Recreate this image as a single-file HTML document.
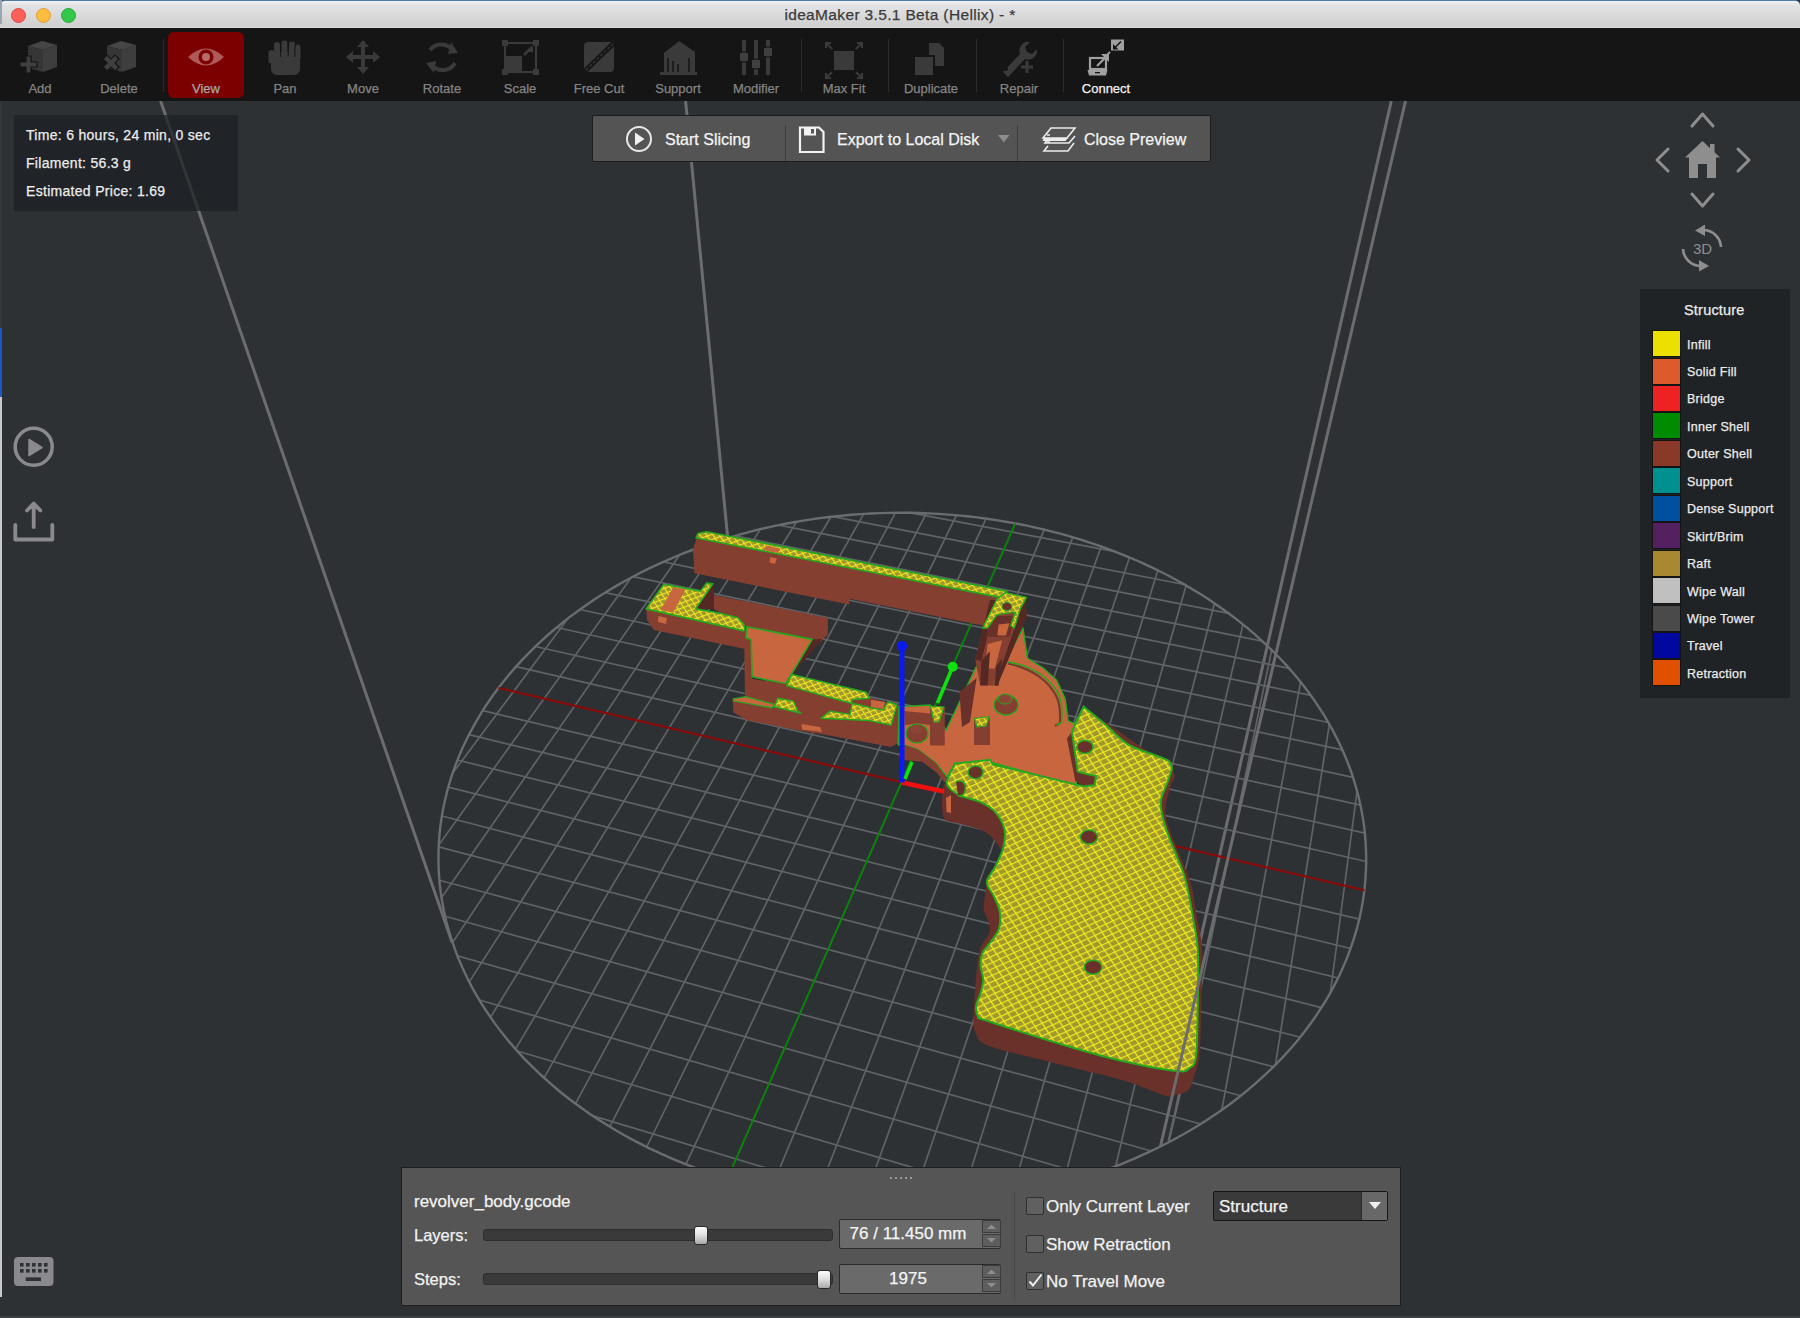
<!DOCTYPE html><html><head><meta charset="utf-8"><style>
*{box-sizing:border-box;margin:0;padding:0}
html,body{width:1800px;height:1318px;overflow:hidden;background:#2d3134;font-family:"Liberation Sans",sans-serif}
div{-webkit-text-stroke:0.25px currentColor}
#title{position:absolute;left:0;top:0;width:1800px;height:28px;background:linear-gradient(#f4f1f1 0px,#e3e3e5 4px,#d0d0d0 25px,#dcdcdc 27px);border-top:1px solid #4f7ca6;border-radius:5px 5px 0 0}
#title .t{position:absolute;left:0;right:0;top:5px;text-align:center;font-size:15.5px;color:#3a3a3a;letter-spacing:0.35px}
.tl{position:absolute;top:7px;width:15px;height:15px;border-radius:50%}
#tb{position:absolute;left:0;top:28px;width:1800px;height:73px;background:#151515}
#view3d{position:absolute;left:0;top:101px;width:1800px;height:1217px;background:#2d3134}
svg#scene{position:absolute;left:0;top:0}
.lbl{position:absolute;font-size:13px;color:#858585;text-align:center;width:90px;top:53px}
.sep{position:absolute;top:11px;width:1px;height:53px;background:#2b2b2b}
#info{position:absolute;left:14px;top:115px;width:224px;height:96px;background:rgba(28,31,34,0.72)}
#info div{position:absolute;left:12px;font-size:14px;color:#ececec;letter-spacing:0.3px;white-space:nowrap}
#slice{position:absolute;left:592px;top:115px;width:619px;height:47px;background:#545454;border:1px solid #1c1c1c;border-radius:2px}
#slice .s{position:absolute;top:9px;width:1px;height:36px;background:#3c3c3c}
#slice .txt{position:absolute;top:15px;font-size:16px;color:#f4f4f4;white-space:nowrap}
#legend{position:absolute;left:1640px;top:289px;width:150px;height:409px;background:#202326}
#legend .h{position:absolute;left:44px;top:13px;font-size:14.5px;color:#ececec;letter-spacing:0.2px}
#legend .sw{position:absolute;left:12px;width:29px;height:27px;border:1px solid #141414}
#legend .n{position:absolute;left:47px;font-size:12.5px;color:#ececec;letter-spacing:0.25px;white-space:nowrap}
#panel{position:absolute;left:401px;top:1167px;width:1000px;height:139px;background:#555555;border:1.5px solid #1e1e1e}
#panel .t{position:absolute;font-size:17px;color:#f2f2f2;white-space:nowrap}
.track{position:absolute;height:12px;background:#3a3a3a;border:1px solid #2e2e2e;border-radius:3px}
.handle{position:absolute;width:14px;height:19px;border-radius:3px;border:1px solid #2a2a2a;background:linear-gradient(#fdfdfd,#e2e2e2 45%,#a9a9a9)}
.spin{position:absolute;width:162px;height:30px;background:#6a6a6a;border:1px solid #2c2c2c;border-radius:2px}
.spin .v{position:absolute;left:0;width:136px;top:4px;text-align:center;font-size:17px;color:#f4f4f4}
.spin .b{position:absolute;left:142px;width:19px;height:13px;background:#5e5e5e;border:1px solid #3c3c3c}
.cb{position:absolute;width:18px;height:18px;background:#606060;border:1px solid #303030;border-radius:2px}
</style></head><body><div id="view3d"><svg id="scene" width="1800" height="1217" viewBox="0 101 1800 1217"><g stroke="#6c6c6e" stroke-width="3" fill="none"><path d="M160.6 101L452 942"/><path d="M685.6 101L727.5 536"/><path d="M1391.3 101L1166.2 1090"/><path d="M1183 1080L1168.7 1141" stroke-width="2.4"/></g><path d="M452.6 773.3L568.1 618.3M592.3 1115.6L886.9 1204.4M438.8 844.9L631.1 577.7M517.2 1051.0L1008.4 1195.6M441.5 897.8L679.6 554.9M479.3 1000.0L1089.4 1175.5M452.5 942.6L721.9 539.7M457.4 955.9L1151.3 1151.0M469.2 981.9L760.5 529.1M445.1 916.3L1200.7 1124.0M490.5 1017.2L796.6 521.7M439.4 880.2L1240.9 1095.7M515.5 1049.1L830.9 516.8M438.7 846.9L1273.6 1066.7M544.0 1077.9L863.7 513.9M441.9 816.0L1300.2 1037.2M575.5 1103.7L895.4 512.8M448.3 787.1L1321.5 1007.6M609.8 1126.7L926.3 513.3M457.4 760.0L1338.1 978.0M646.7 1147.0L956.5 515.2M469.0 734.6L1350.6 948.5M685.9 1164.3L986.1 518.6M482.7 710.6L1359.2 919.2M770.7 1190.2L1044.2 529.6M516.0 666.7L1366.2 861.5M816.0 1198.5L1072.8 537.2M535.4 646.5L1364.9 833.1M862.9 1203.3L1101.2 546.5M556.7 627.5L1360.5 805.1M911.3 1204.6L1129.5 557.5M579.9 609.5L1353.0 777.3M960.9 1201.9L1157.8 570.4M605.3 592.6L1342.3 749.8M1011.7 1195.1L1186.1 585.5M632.9 576.7L1328.4 722.5M1063.3 1183.4L1214.5 603.3M663.3 561.9L1310.8 695.4M1115.7 1166.2L1243.0 624.4M696.9 548.2L1289.1 668.3M1168.6 1142.4L1271.7 650.0M734.8 535.9L1262.4 641.1M1221.8 1110.0L1300.6 681.9M778.8 525.1L1228.7 613.4M1275.4 1064.8L1329.4 724.2M833.0 516.6L1184.3 584.5M1330.3 992.8L1357.1 791.1M911.0 512.9L1115.3 551.7" stroke="#5f6266" stroke-width="1.7" fill="none"/>
<polygon points="1364.4,890.2 1365.3,880.8 1365.9,871.4 1366.2,862.1 1366.1,852.8 1365.7,843.6 1365.0,834.4 1364.0,825.3 1362.6,816.3 1360.9,807.4 1359.0,798.5 1356.7,789.7 1354.2,781.1 1351.4,772.5 1348.3,764.1 1344.9,755.7 1341.3,747.5 1337.4,739.4 1333.3,731.4 1328.9,723.5 1324.4,715.7 1319.5,708.1 1314.5,700.6 1309.3,693.2 1303.8,686.0 1298.2,678.9 1292.3,672.0 1286.3,665.1 1280.0,658.5 1273.6,651.9 1267.1,645.5 1260.3,639.3 1253.4,633.2 1246.4,627.2 1239.2,621.4 1231.9,615.7 1224.4,610.2 1216.8,604.9 1209.0,599.6 1201.2,594.6 1193.2,589.7 1185.1,584.9 1176.9,580.3 1168.6,575.8 1160.2,571.5 1151.7,567.4 1143.1,563.4 1134.4,559.5 1125.6,555.8 1116.8,552.3 1107.8,548.9 1098.9,545.7 1089.8,542.6 1080.7,539.6 1071.5,536.9 1062.2,534.2 1052.9,531.8 1043.6,529.4 1034.2,527.3 1024.8,525.2 1015.3,523.4 1005.8,521.7 996.3,520.1 986.7,518.7 977.1,517.4 967.5,516.3 957.8,515.4 948.2,514.6 938.5,513.9 928.8,513.4 919.1,513.0 909.4,512.8 899.7,512.8 890.0,512.9 880.3,513.1 870.6,513.5 861.0,514.1 851.3,514.8 841.7,515.7 832.0,516.7 822.4,517.8 812.9,519.1 803.3,520.6 793.8,522.2 784.3,524.0 774.9,525.9 765.5,528.0 756.1,530.2 746.8,532.6 737.6,535.1 728.4,537.8 719.2,540.6 710.1,543.6 701.1,546.7 692.2,550.0 683.3,553.4 674.5,557.0 665.8,560.8 657.2,564.7 648.7,568.7 640.2,572.9 631.9,577.2 623.7,581.7 615.5,586.4 607.5,591.2 599.6,596.1 591.8,601.2 584.2,606.5 576.6,611.9 569.2,617.4 562.0,623.1 554.9,629.0 547.9,635.0 541.1,641.1 534.5,647.4 528.0,653.8 521.7,660.4 515.6,667.1 509.7,673.9 503.9,680.9 498.4,688.0 493.0,695.3 487.9,702.7 483.0,710.2 478.3,717.8 473.8,725.6 469.6,733.5 465.6,741.5 461.8,749.6 458.3,757.9 455.1,766.2 452.1,774.7 449.4,783.3 447.0,791.9 444.9,800.7 443.0,809.5 441.5,818.5 440.2,827.5 439.3,836.6 438.7,845.7 438.5,855.0 438.5,864.2 438.9,873.6 439.6,883.0 440.7,892.4 442.2,901.8 444.0,911.3 446.1,920.8 448.7,930.3 451.6,939.7 454.9,949.2 458.5,958.7 462.6,968.1 467.0,977.5 471.8,986.9 477.0,996.2 482.6,1005.4 488.6,1014.5 495.0,1023.6 501.8,1032.6 508.9,1041.4 516.5,1050.2 524.4,1058.8 532.8,1067.2 541.5,1075.5 550.6,1083.7 560.0,1091.7 569.9,1099.5 580.1,1107.0 590.6,1114.4 601.5,1121.6 612.8,1128.5 624.3,1135.2 636.2,1141.6 648.4,1147.8 660.9,1153.7 673.7,1159.3 686.7,1164.7 700.0,1169.7 713.6,1174.4 727.3,1178.8 741.3,1182.9 755.5,1186.6 769.9,1190.0 784.4,1193.1 799.1,1195.8 813.9,1198.2 828.9,1200.2 843.9,1201.8 859.0,1203.0 874.1,1203.9 889.3,1204.5 904.5,1204.6 919.7,1204.4 934.9,1203.8 950.1,1202.9 965.1,1201.5 980.1,1199.8 995.1,1197.8 1009.8,1195.4 1024.5,1192.6 1039.0,1189.5 1053.3,1186.0 1067.5,1182.2 1081.4,1178.1 1095.2,1173.6 1108.7,1168.8 1121.9,1163.8 1134.9,1158.4 1147.6,1152.7 1160.0,1146.8 1172.1,1140.5 1183.9,1134.0 1195.4,1127.3 1206.6,1120.3 1217.4,1113.1 1227.8,1105.7 1237.9,1098.0 1247.7,1090.2 1257.0,1082.2 1266.0,1074.0 1274.6,1065.6 1282.9,1057.1 1290.7,1048.5 1298.2,1039.7 1305.2,1030.8 1311.9,1021.8 1318.1,1012.7 1324.0,1003.5 1329.5,994.3 1334.6,984.9 1339.3,975.6 1343.6,966.1 1347.5,956.7 1351.0,947.2 1354.2,937.7 1357.0,928.2 1359.4,918.7 1361.4,909.2 1363.1,899.7 1364.4,890.2" stroke="#6a6c6f" stroke-width="2.4" fill="none"/>
<path d="M498.4 688.0L1364.4 890.2" stroke="#8a0a0a" stroke-width="2.2"/>
<path d="M727.3 1178.8L1015.3 523.4" stroke="#0a840a" stroke-width="2"/><defs><pattern id="inf" patternUnits="userSpaceOnUse" width="1" height="1" patternTransform="matrix(7.1,-3.2,3.25,4.94,0,0)"><rect width="1" height="1" fill="#a0972f"/><rect x="0" y="0" width="0.17" height="1" fill="#eeec1c"/><rect x="0" y="0" width="1" height="0.21" fill="#eeec1c"/></pattern><pattern id="inf2" patternUnits="userSpaceOnUse" width="1" height="1" patternTransform="matrix(5.2,-1.9,2.8,4.2,0,0)"><rect width="1" height="1" fill="#a0972f"/><rect x="0" y="0" width="0.2" height="1" fill="#f2ea1e"/><rect x="0" y="0" width="1" height="0.22" fill="#f2ea1e"/></pattern></defs>
<polygon points="696.7,537.8 999.7,597.4 982.6,625.6 849.3,598.7 849.3,604.5 694.4,573.3 693.0,550.0" fill="#843f31" />
<polygon points="696.0,538.0 698.0,533.5 706.7,531.7 1007.0,591.3 1000.0,597.4 696.7,538.0" fill="url(#inf2)" stroke="#26a81e" stroke-width="1.6" stroke-linejoin="round" />
<polygon points="765.6,545.6 780.0,548.5 778.0,553.0 764.5,550.3" fill="#c8663f" />
<polygon points="770.5,557.0 776.7,558.5 775.0,564.0 769.5,562.5" fill="#c8663f" />
<polygon points="713.9,595.0 827.8,617.8 828.0,634.4 820.0,642.2 813.3,639.4 745.6,626.7 713.9,608.9" fill="#843f31" />
<polygon points="646.1,608.9 745.0,631.1 751.1,640.0 750.0,650.0 653.9,630.0 647.2,620.0" fill="#843f31" />
<polygon points="712.8,583.9 714.2,585.6 713.9,608.9 696.1,608.9" fill="#552823" />
<polygon points="646.1,608.9 663.9,584.2 700.6,591.1 706.7,583.1 712.8,583.9 695.6,608.9 717.8,612.8 737.8,617.8 743.9,624.4 745.0,631.1" fill="url(#inf2)" stroke="#26a81e" stroke-width="1.6" stroke-linejoin="round" />
<polygon points="660.6,610.0 673.3,587.2 685.6,589.4 673.3,612.2" fill="#c8663f" />
<polygon points="658.5,616.0 667.0,618.0 666.0,624.0 658.0,622.0" fill="#c8663f" />
<polygon points="744.0,630.0 751.0,640.0 752.2,676.7 752.0,698.0 745.0,698.0" fill="#843f31" />
<polygon points="812.2,639.4 822.2,638.9 816.7,645.6 794.4,672.2 785.6,683.9" fill="#552823" />
<polygon points="746.7,626.7 812.2,639.4 785.6,683.9 752.2,676.7 751.1,639.4 746.0,638.0" fill="#c8663f" stroke="#26a81e" stroke-width="1.6" stroke-linejoin="round" />
<polygon points="745.6,677.8 785.6,685.6 791.7,674.4 866.7,692.2 870.0,697.8 898.9,705.6 897.8,742.2 891.1,746.7 746.7,720.0 732.2,700.0 745.6,696.7" fill="#843f31" />
<polygon points="745.6,677.8 785.6,684.0 852.2,698.9 850.0,708.9 774.0,698.0 745.6,698.0" fill="#843f31" />
<polygon points="732.8,698.9 774.4,705.1 801.1,713.9 824.4,718.9 891.1,725.0 898.9,707.8 900.0,742.0 891.1,746.7 824.4,734.4 802.2,731.1 746.7,720.0 733.3,712.2" fill="#843f31" />
<polygon points="786.7,685.6 791.7,674.4 866.1,692.2 869.4,698.3 852.2,699.5 851.1,703.3 786.7,685.6" fill="url(#inf2)" stroke="#26a81e" stroke-width="1.5" stroke-linejoin="round" />
<polygon points="733.3,698.9 745.6,696.7 774.4,704.4 772.2,707.8 733.3,701.0" fill="#c8663f" stroke="#26a81e" stroke-width="1.2" stroke-linejoin="round" />
<polygon points="774.4,706.7 777.8,698.3 793.3,701.1 797.8,711.1 801.1,713.3" fill="url(#inf2)" stroke="#26a81e" stroke-width="1.4" stroke-linejoin="round" />
<polygon points="821.1,718.3 830.0,711.1 850.0,714.4 852.2,703.3 871.1,707.8 883.3,710.0 887.8,702.0 897.0,704.5 891.1,725.0 868.9,720.5" fill="url(#inf2)" stroke="#26a81e" stroke-width="1.4" stroke-linejoin="round" />
<polygon points="871.0,700.0 885.0,702.0 883.3,709.0 871.1,707.0" fill="#c8663f" />
<polygon points="801.7,724.0 820.0,727.0 822.0,732.0 802.0,729.5" fill="#c8663f" />
<polygon points="898.9,706.7 930.0,705.0 946.0,730.2 976.6,666.0 1008.3,655.6 1023.0,628.1 1027.4,658.2 1043.2,668.0 1056.5,680.0 1065.0,698.3 1067.5,715.3 1068.0,720.7 1074.8,723.8 1083.6,706.7 1075.0,760.0 1077.8,771.8 1076.0,786.0 990.0,762.0 955.0,763.5 947.0,777.0 935.6,762.7 917.8,749.3 904.4,744.9 898.2,745.0" fill="#c8663f" stroke="#26a81e" stroke-width="1.4" stroke-linejoin="round" />
<polygon points="975.3,659.9 990.0,600.0 1025.4,600.0 1026.7,615.9 997.3,685.6 980.2,685.6" fill="#843f31" />
<polygon points="975.3,659.9 990.0,600.0 996.0,600.0 981.4,661.0" fill="#552823" />
<polygon points="1025.4,600.0 1026.7,615.9 997.3,685.6 994.9,685.6 1020.0,612.0" fill="#552823" />
<polygon points="987.6,615.9 1014.4,615.9 1009.5,636.7 987.6,636.7" fill="#69312a" />
<polygon points="998.6,624.4 1009.5,623.2 1005.9,635.4 997.3,635.4" fill="#c8663f" />
<polygon points="987.6,644.0 1002.2,640.3 994.9,668.4 985.1,668.4" fill="#c8663f" />
<polygon points="981.4,661.1 990.0,651.3 987.6,685.6 980.2,685.6" fill="#552823" />
<polygon points="996.1,666.0 1002.2,658.7 998.6,685.6 994.9,685.6" fill="#552823" />
<polygon points="982.6,628.0 997.2,598.7 1005.8,592.6 1026.5,597.4 1020.4,608.4 1014.3,628.0 1010.7,625.6 1015.5,612.1 997.2,614.6 987.4,628.0" fill="url(#inf2)" stroke="#26a81e" stroke-width="1.4" stroke-linejoin="round" />
<ellipse cx="1007" cy="606.5" rx="5" ry="4" fill="#69312a" stroke="#26a81e" stroke-width="1"/>
<path d="M1008 663.5C1030 668 1050 680 1058 700C1061 710 1060 718 1060 723L1055 726" stroke="#7a3a2e" stroke-width="2.2" fill="none"/>
<path d="M1008 661.9C1032 666 1052 678 1060.2 698C1063 708 1062 716 1061.4 722.5L1056.5 725" stroke="#26a81e" stroke-width="1.5" fill="none"/>
<polygon points="904.4,744.9 917.8,749.3 935.6,762.7 946.2,776.9 947.1,782.2 944.4,782.2 937.3,773.3 922.2,761.8 904.4,760.0 898.0,756.0" fill="#843f31" />
<polygon points="930.0,706.0 944.8,707.0 944.8,745.4 930.0,745.4" fill="#843f31" />
<polygon points="930.5,706.0 944.0,707.0 939.0,722.0 934.0,722.0" fill="url(#inf2)" stroke="#26a81e" stroke-width="1.2" stroke-linejoin="round" />
<polygon points="974.0,718.0 990.0,716.5 990.0,745.0 974.0,745.0" fill="#843f31" />
<polygon points="974.5,718.5 989.5,716.5 986.0,726.0 977.0,727.0" fill="url(#inf2)" stroke="#26a81e" stroke-width="1.2" stroke-linejoin="round" />
<ellipse cx="1006" cy="705" rx="12" ry="10" fill="#843f31" stroke="#26a81e" stroke-width="1.3"/><ellipse cx="1005" cy="699" rx="7" ry="5" fill="#8a4535" stroke="#26a81e" stroke-width="1"/>
<polygon points="904.2,711.0 930.1,713.5 930.1,725.0 917.6,723.4 905.0,725.0" fill="#843f31" />
<ellipse cx="917" cy="733.5" rx="11" ry="9.5" fill="#843f31" stroke="#26a81e" stroke-width="1.2"/><ellipse cx="916.5" cy="729.5" rx="6" ry="4.5" fill="#8a4535"/>
<polygon points="959.4,692.0 976.6,678.0 970.0,722.0 962.0,727.0" fill="#69312a" />
<path d="M955.0 763.5C960.9 762.9 984.2 760.4 990.1 759.8C990.5 760.5 992.2 763.5 992.6 764.3C1007.8 768.0 1068.4 782.8 1083.6 786.5C1085.4 786.3 1092.7 785.4 1094.5 785.2C1094.8 783.7 1095.8 777.5 1096.1 776.0C1093.0 775.3 1080.8 772.5 1077.8 771.8C1076.8 765.1 1072.9 738.4 1071.9 731.7C1073.9 727.5 1081.6 710.9 1083.6 706.7C1098.3 717.0 1157.3 758.2 1172.1 768.5C1172.5 769.9 1174.9 773.8 1174.6 776.8C1174.3 779.8 1171.9 781.2 1170.4 786.8C1168.9 792.4 1165.5 802.8 1165.4 810.2C1165.3 817.6 1167.5 823.2 1170.0 831.0C1172.5 838.8 1177.1 848.5 1180.5 857.0C1183.9 865.5 1187.9 872.9 1190.5 882.0C1193.1 891.1 1194.1 900.1 1196.0 911.4C1197.9 922.7 1201.2 934.7 1202.1 949.8C1203.0 964.9 1201.7 984.6 1201.3 1002.1C1200.9 1019.6 1200.7 1042.3 1199.5 1054.5C1198.3 1066.7 1196.0 1069.6 1194.3 1075.4C1192.5 1081.2 1191.9 1086.2 1189.0 1089.4C1186.1 1092.6 1180.9 1093.6 1176.8 1094.6C1172.7 1095.6 1173.3 1097.8 1164.6 1095.5C1155.9 1093.2 1142.8 1086.1 1124.5 1080.7C1106.2 1075.3 1077.4 1069.0 1054.7 1063.2C1032.0 1057.4 1001.6 1051.0 988.4 1045.8C975.2 1040.6 977.8 1036.2 975.3 1031.8C972.8 1027.4 973.8 1024.5 973.6 1019.6C973.5 1014.7 973.5 1013.2 974.4 1002.1C975.3 991.0 976.4 965.0 979.0 953.0C981.6 941.0 989.2 937.2 990.0 930.0C990.8 922.8 984.9 915.5 984.0 910.0C983.1 904.5 984.2 902.0 984.9 897.0C985.6 892.0 985.8 884.5 988.0 880.0C990.2 875.5 995.5 873.8 998.0 870.0C1000.5 866.2 1003.0 861.2 1003.0 857.0C1003.0 852.8 1001.0 849.2 998.0 845.0C995.0 840.8 991.4 835.5 985.1 831.9C978.8 828.3 967.0 826.1 960.0 823.6C953.0 821.1 946.2 823.2 943.4 816.9C940.6 810.6 942.8 791.6 943.4 786.0C944.0 780.4 944.8 787.2 946.7 783.5C948.6 779.8 953.6 766.8 955.0 763.5Z" fill="#69312a"/>
<polygon points="1066.9,738.4 1071.9,731.7 1077.8,771.8 1096.1,776.0 1094.5,785.2 1083.6,786.5 1075.3,781.0" fill="#69312a" />
<path d="M955.0 763.5C960.9 762.9 984.2 760.4 990.1 759.8C990.5 760.5 992.2 763.5 992.6 764.3C1007.8 768.0 1068.4 782.8 1083.6 786.5C1085.4 786.3 1092.7 785.4 1094.5 785.2C1094.8 783.7 1095.8 777.5 1096.1 776.0C1093.0 775.3 1080.8 772.5 1077.8 771.8C1076.8 765.1 1072.9 738.4 1071.9 731.7C1073.9 727.5 1081.6 710.9 1083.6 706.7C1087.5 709.9 1103.1 722.7 1107.0 725.9C1110.5 729.0 1119.6 739.3 1127.9 744.3C1136.2 749.3 1150.3 753.2 1157.1 756.0C1163.9 758.8 1166.3 758.9 1168.8 761.0C1171.3 763.1 1171.5 767.2 1172.1 768.5C1171.3 771.0 1168.9 778.5 1167.1 783.5C1165.3 788.5 1162.3 794.0 1161.3 798.5C1160.3 803.0 1160.3 804.6 1161.3 810.2C1162.3 815.8 1164.5 824.1 1167.1 831.9C1169.7 839.7 1174.0 849.0 1177.1 857.0C1180.2 865.0 1183.0 870.4 1185.6 880.0C1188.2 889.6 1190.5 903.3 1192.5 914.9C1194.5 926.5 1196.9 935.3 1197.8 949.8C1198.7 964.3 1198.1 984.4 1197.8 1002.1C1197.5 1019.8 1197.5 1045.2 1196.0 1056.2C1194.5 1067.2 1192.2 1065.9 1189.0 1068.4C1185.8 1070.9 1187.5 1072.2 1176.8 1071.1C1166.0 1069.9 1142.0 1065.4 1124.5 1061.5C1107.0 1057.6 1094.8 1054.2 1072.1 1047.5C1049.4 1040.8 1004.1 1026.5 988.4 1021.3C972.7 1016.1 979.9 1018.7 977.9 1016.1C975.9 1013.5 975.8 1009.4 976.2 1005.6C976.6 1001.8 979.3 997.8 980.5 993.4C981.7 989.0 983.2 984.1 983.2 979.5C983.2 974.9 980.6 969.9 980.5 965.5C980.4 961.1 980.7 957.1 982.3 953.3C983.9 949.5 987.3 946.9 990.1 942.8C992.9 938.7 997.3 934.1 998.9 928.9C1000.5 923.7 1000.6 916.9 999.7 911.4C998.8 905.9 995.8 900.6 993.6 895.7C991.5 890.8 986.5 886.8 986.8 882.0C987.0 877.2 992.3 872.8 995.1 867.0C997.9 861.2 1002.0 853.4 1003.5 847.0C1005.0 840.6 1005.7 834.5 1004.3 828.6C1002.9 822.8 999.1 816.4 995.1 811.9C991.1 807.4 985.4 804.4 980.1 801.9C974.8 799.4 967.1 798.1 963.4 796.9C959.6 795.6 960.4 796.6 957.6 794.4C954.8 792.2 947.1 788.6 946.7 783.5C946.3 778.4 953.6 766.8 955.0 763.5Z" fill="url(#inf)" stroke="#26a81e" stroke-width="2"/>
<path d="M956 781.5Q965 779 965.5 788Q965 797 958 795.5" fill="#69312a" stroke="#26a81e" stroke-width="1.6"/>
<polygon points="946.0,798.0 951.0,795.0 951.0,813.0 946.5,812.0" fill="#c8663f" />
<ellipse cx="1093.1" cy="967.2" rx="8.7" ry="7" fill="#69312a" stroke="#26a81e" stroke-width="1.5"/>
<ellipse cx="1085" cy="747" rx="8" ry="6.5" fill="#69312a" stroke="#26a81e" stroke-width="1.5"/>
<ellipse cx="975.6" cy="772.3" rx="7.5" ry="6.5" fill="#69312a" stroke="#26a81e" stroke-width="1.5"/>
<ellipse cx="1089" cy="837" rx="8.5" ry="7" fill="#69312a" stroke="#26a81e" stroke-width="1.5"/><path d="M901.8 782.5L944 791.5" stroke="#f01010" stroke-width="4.5"/><path d="M902 646V782.5" stroke="#0a1af0" stroke-width="5"/><circle cx="902" cy="646" r="5.2" fill="#0a1af0"/><path d="M905 779L912 762" stroke="#10e010" stroke-width="3.5"/><path d="M937.5 703L952.7 666.7" stroke="#10e010" stroke-width="3.5"/><circle cx="952.7" cy="666.7" r="5" fill="#10e010"/><path d="M1405.5 101L1160.5 1146" stroke="#6c6c6e" stroke-width="3"/></svg></div><div id="title"><div class="tl" style="left:11px;background:#fc605b;border:0.5px solid #de4a45"></div><div class="tl" style="left:36px;background:#fdbc40;border:0.5px solid #dea034"></div><div class="tl" style="left:61px;background:#34c84a;border:0.5px solid #27aa35"></div><div class="t">ideaMaker 3.5.1 Beta (Hellix) - *</div></div><div id="tb"><div style="position:absolute;left:168px;top:4px;width:76px;height:66px;background:#7c0000;border-radius:6px"></div><div class="lbl" style="left:-5px;color:#848484">Add</div><div class="lbl" style="left:74px;color:#848484">Delete</div><div class="lbl" style="left:161px;color:#a8a8a8">View</div><div class="lbl" style="left:240px;color:#848484">Pan</div><div class="lbl" style="left:318px;color:#848484">Move</div><div class="lbl" style="left:397px;color:#848484">Rotate</div><div class="lbl" style="left:475px;color:#848484">Scale</div><div class="lbl" style="left:554px;color:#848484">Free Cut</div><div class="lbl" style="left:633px;color:#848484">Support</div><div class="lbl" style="left:711px;color:#848484">Modifier</div><div class="lbl" style="left:799px;color:#848484">Max Fit</div><div class="lbl" style="left:886px;color:#848484">Duplicate</div><div class="lbl" style="left:974px;color:#848484">Repair</div><div class="lbl" style="left:1061px;color:#f2f2f2">Connect</div><div class="sep" style="left:163px"></div><div class="sep" style="left:801px"></div><div class="sep" style="left:888px"></div><div class="sep" style="left:976px"></div><div class="sep" style="left:1063px"></div><svg width="1800" height="73" style="position:absolute;left:0;top:0"><path d="M28 18L42 13L57 17L43 22Z" fill="#454545"/><path d="M28 18L43 22L43 44L28 40Z" fill="#363636"/><path d="M43 22L57 17L57 39L43 44Z" fill="#3e3e3e"/><path d="M26 28h5v6h6v5h-6v6h-5v-6h-6v-5h6z" fill="#3f3f3f" stroke="#151515" stroke-width="1.2"/><path d="M107 18L121 13L136 17L122 22Z" fill="#454545"/><path d="M107 18L122 22L122 44L107 40Z" fill="#363636"/><path d="M122 22L136 17L136 39L122 44Z" fill="#3e3e3e"/><path d="M103 31l4-4 4 4 4-4 4 4-4 4 4 4-4 4-4-4-4 4-4-4 4-4z" fill="#3f3f3f" stroke="#151515" stroke-width="1.2"/><path d="M188 29Q206 12 224 29Q206 46 188 29Z" fill="#b86a6a" opacity="0.85"/><circle cx="206" cy="29" r="7.5" fill="#7c0000"/><circle cx="206" cy="29" r="4" fill="#b86a6a"/><g fill="#3a3a3a"><rect x="271" y="24" width="29" height="23" rx="6"/><rect x="274" y="14" width="6" height="18" rx="3"/><rect x="281.5" y="12.5" width="6" height="18" rx="3"/><rect x="289" y="13.5" width="6" height="18" rx="3"/><rect x="295" y="16.5" width="5.5" height="16" rx="2.7"/><path d="M268.5 25q0-3 3-3t3 3v10h-6z"/></g><g stroke="#151515" stroke-width="1"><path d="M280.7 15v14M288.2 14v14M294.9 17v12"/></g><g fill="#3a3a3a"><path d="M361 18h4v22h-4z"/><path d="M352 27h22v4h-22z"/><path d="M363 12l6 7h-12z"/><path d="M363 46l6-7h-12z"/><path d="M346 29l7-6v12z"/><path d="M380 29l-7-6v12z"/></g><g fill="none" stroke="#3a3a3a" stroke-width="4"><path d="M430 22a14 14 0 0 1 23 1"/><path d="M455 35a14 14 0 0 1-23 2"/></g><path d="M451 14l7 11l-10 1z" fill="#3a3a3a"/><path d="M434 45l-8-10l10-2z" fill="#3a3a3a"/><rect x="505" y="15" width="31" height="29" fill="none" stroke="#3a3a3a" stroke-width="2"/><rect x="506" y="28" width="16" height="16" fill="#3a3a3a"/><g fill="none" stroke="#3a3a3a" stroke-width="2"><rect x="503" y="13" width="4" height="4"/><rect x="534" y="13" width="4" height="4"/><rect x="503" y="42" width="4" height="4"/><rect x="534" y="42" width="4" height="4"/></g><path d="M524 27l8-8" stroke="#3a3a3a" stroke-width="2.5"/><path d="M533 18v6h-6z" fill="#3a3a3a"/><path d="M587 14h27v26q0 4-4 4h-26v-26q0-4 4-4z" fill="#3a3a3a"/><path d="M584 44l32-31" stroke="#151515" stroke-width="5"/><path d="M586 42l28-27" stroke="#3a3a3a" stroke-width="1.2" stroke-dasharray="3 2"/><path d="M664 25l15-12l16 11v20h-31z" fill="#3a3a3a"/><g stroke="#151515" stroke-width="1.5"><path d="M668 30v14M673 33v11M678 36v8M689 30v14"/></g><rect x="660" y="44" width="37" height="3" fill="#3a3a3a"/><g fill="#3a3a3a"><rect x="742" y="12" width="4" height="35"/><rect x="754" y="12" width="4" height="35"/><rect x="766" y="12" width="4" height="35"/><rect x="740" y="25" width="8" height="8" fill="#3f3f3f"/><rect x="752" y="32" width="8" height="8" fill="#3f3f3f"/><rect x="764" y="20" width="8" height="8" fill="#3f3f3f"/></g><g stroke="#151515" stroke-width="1"><path d="M742 24h4M742 34h4M754 31h4M754 41h4M766 19h4M766 29h4"/></g><rect x="834" y="23" width="20" height="19" fill="#3a3a3a"/><g stroke="#3a3a3a" stroke-width="2" fill="none"><path d="M832 21l-6-6M856 21l6-6M832 44l-6 6M856 44l6 6"/><path d="M826 20v-5h5M862 20v-5h-5M826 45v5h5M862 45v5h-5"/></g><path d="M929 15h10l5 5v18h-15z" fill="#3a3a3a"/><rect x="914" y="28" width="20" height="20" fill="#3a3a3a" stroke="#151515" stroke-width="2"/><path d="M1003 44l17-18a9 9 0 0 1 10-12l-5 5l2 5l5 2l5-5a9 9 0 0 1-12 10l-17 18z" fill="#3a3a3a"/><circle cx="1006" cy="41" r="2" fill="#151515"/><path d="M1021 39h12M1027 33v12" stroke="#3a3a3a" stroke-width="3"/><rect x="1090" y="30" width="16" height="11" fill="none" stroke="#a0a0a0" stroke-width="2.2"/><path d="M1087.5 42h20l-1.5 5.5h-17z" fill="#a0a0a0"/><rect x="1095" y="44" width="5" height="1.3" fill="#151515"/><path d="M1097 38l10-10" stroke="#a0a0a0" stroke-width="2.2"/><path d="M1109 26v8l-8-8z" fill="#a0a0a0"/><path d="M1111 11.5h13v11h-13z" fill="#a0a0a0"/><path d="M1121 13.5l-7 7" stroke="#151515" stroke-width="1.6"/><path d="M1113 21.5v-5.5l5.5 5.5z" fill="#151515"/><path d="M1110 24l-5 5" stroke="#a0a0a0" stroke-width="1.8"/></svg></div><div id="info"><div style="top:12px">Time: 6 hours, 24 min, 0 sec</div><div style="top:40px">Filament: 56.3 g</div><div style="top:68px">Estimated Price: 1.69</div></div><div id="slice"><svg width="619" height="47" style="position:absolute;left:-1px;top:-1px"><circle cx="47" cy="24" r="12" stroke="#e8e8e8" stroke-width="2" fill="none"/><path d="M43 17.5L52.5 24L43 30.5Z" fill="#f0f0f0"/><path d="M208 12.5h19l4.5 4.5v20h-23.5z" stroke="#f2f2f2" stroke-width="2.2" fill="none" stroke-linejoin="miter"/><path d="M212 12.5h12v8h-12z" fill="#f2f2f2"/><rect x="219" y="14" width="3" height="4.5" fill="#545454"/><path d="M406 20h11.5l-5.75 7.5z" fill="#8d8d8d"/><g stroke="#ececec" stroke-width="1.6" fill="none"><path d="M459 13h24l-8 10h-24z"/><path d="M455 20h3M483 21l-6 7h-24l3-4"/><path d="M455 27h3M482 28l-6 8h-24l4-5"/></g><path d="M452 23h24l-2.5 3h-23z" fill="#ececec"/></svg><div class="s" style="left:192px"></div><div class="s" style="left:424px"></div><div class="txt" style="left:72px">Start Slicing</div><div class="txt" style="left:244px">Export to Local Disk</div><div class="txt" style="left:491px">Close Preview</div></div><svg width="120" height="180" style="position:absolute;left:1640px;top:100px"><g stroke="#8e8e8e" stroke-width="3" stroke-linecap="round" stroke-linejoin="round" fill="none"><path d="M52 26L62.5 14L73 26"/><path d="M52 94L62.5 106L73 94"/><path d="M28 49L17 60L28 71"/><path d="M98 49L109 60L98 71"/></g><path d="M62.5 41L80 57.5H76V78H67V64H58V78H49V57.5H45Z" fill="#8e8e8e"/><rect x="70" y="44" width="4.5" height="9" fill="#8e8e8e"/><g stroke="#8e8e8e" stroke-width="2.6" fill="none"><path d="M64 130A18 18 0 0 1 81 147"/><path d="M43 149A18 18 0 0 0 60 166"/></g><path d="M55 130.5L65 124.5V136Z" fill="#8e8e8e"/><path d="M69 166L59 160V171.5Z" fill="#8e8e8e"/><text x="62.5" y="154.3" text-anchor="middle" font-family="Liberation Sans" font-size="15" fill="#8e8e8e">3D</text></svg><div id="legend"><div class="h">Structure</div><div class="sw" style="top:41.0px;background:#ece000"></div><div class="n" style="top:48.5px">Infill</div><div class="sw" style="top:68.5px;background:#dc5a2c"></div><div class="n" style="top:76.0px">Solid Fill</div><div class="sw" style="top:95.9px;background:#ee2222"></div><div class="n" style="top:103.4px">Bridge</div><div class="sw" style="top:123.3px;background:#008c00"></div><div class="n" style="top:130.8px">Inner Shell</div><div class="sw" style="top:150.8px;background:#8a3828"></div><div class="n" style="top:158.3px">Outer Shell</div><div class="sw" style="top:178.2px;background:#009090"></div><div class="n" style="top:185.8px">Support</div><div class="sw" style="top:205.7px;background:#0050a0"></div><div class="n" style="top:213.2px">Dense Support</div><div class="sw" style="top:233.2px;background:#55205f"></div><div class="n" style="top:240.7px">Skirt/Brim</div><div class="sw" style="top:260.6px;background:#a88830"></div><div class="n" style="top:268.1px">Raft</div><div class="sw" style="top:288.0px;background:#c0c0c0"></div><div class="n" style="top:295.5px">Wipe Wall</div><div class="sw" style="top:315.5px;background:#4a4a4a"></div><div class="n" style="top:323.0px">Wipe Tower</div><div class="sw" style="top:342.9px;background:#0008a0"></div><div class="n" style="top:350.4px">Travel</div><div class="sw" style="top:370.4px;background:#e05000"></div><div class="n" style="top:377.9px">Retraction</div></div><svg width="70" height="900" style="position:absolute;left:0;top:400px"><circle cx="33.7" cy="46.8" r="18.5" stroke="#8a8a8e" stroke-width="3.5" fill="none"/><path d="M29 39.5L42 47.5L29 55.5Z" fill="#8a8a8e" stroke="#8a8a8e" stroke-width="1.5" stroke-linejoin="round"/><g stroke="#8a8a8e" stroke-width="3.8" stroke-linecap="round" stroke-linejoin="round" fill="none"><path d="M33.7 127V104M27 110.5L33.7 103.5L40.4 110.5"/><path d="M15.3 125V139.5H52.3V125"/></g><rect x="14" y="857" width="39.5" height="29" rx="4" fill="#8a8a8e"/><rect x="20" y="863" width="3.6" height="3.6" fill="#2d3134"/><rect x="20" y="869" width="3.6" height="3.6" fill="#2d3134"/><rect x="26" y="863" width="3.6" height="3.6" fill="#2d3134"/><rect x="26" y="869" width="3.6" height="3.6" fill="#2d3134"/><rect x="32" y="863" width="3.6" height="3.6" fill="#2d3134"/><rect x="32" y="869" width="3.6" height="3.6" fill="#2d3134"/><rect x="38" y="863" width="3.6" height="3.6" fill="#2d3134"/><rect x="38" y="869" width="3.6" height="3.6" fill="#2d3134"/><rect x="44" y="863" width="3.6" height="3.6" fill="#2d3134"/><rect x="44" y="869" width="3.6" height="3.6" fill="#2d3134"/><rect x="25.7" y="877.4" width="15.3" height="3.6" fill="#2d3134"/></svg><div id="panel"><div style="position:absolute;left:488px;top:9px;width:24px;height:2px;background:repeating-linear-gradient(90deg,#9a9a9a 0 2px,transparent 2px 5px)"></div><div class="t" style="left:12px;top:24px">revolver_body.gcode</div><div class="t" style="left:12px;top:58px;font-size:16.5px">Layers:</div><div class="t" style="left:12px;top:102px;font-size:16.5px">Steps:</div><div class="track" style="left:81px;top:61px;width:350px"></div><div class="track" style="left:81px;top:105px;width:350px"></div><div class="handle" style="left:292px;top:58px"></div><div class="handle" style="left:415px;top:102px"></div><div class="spin" style="left:437px;top:51px"><div class="v">76 / 11.450 mm</div><div class="b" style="top:0"><svg width="17" height="11" style="position:absolute;left:0;top:0"><path d="M4 8L8.5 3.5L13 8Z" fill="#8c8c8c"/></svg></div><div class="b" style="top:14px"><svg width="17" height="11" style="position:absolute;left:0;top:0"><path d="M4 3L8.5 7.5L13 3Z" fill="#8c8c8c"/></svg></div></div><div class="spin" style="left:437px;top:96px"><div class="v">1975</div><div class="b" style="top:0"><svg width="17" height="11" style="position:absolute;left:0;top:0"><path d="M4 8L8.5 3.5L13 8Z" fill="#8c8c8c"/></svg></div><div class="b" style="top:14px"><svg width="17" height="11" style="position:absolute;left:0;top:0"><path d="M4 3L8.5 7.5L13 3Z" fill="#8c8c8c"/></svg></div></div><div style="position:absolute;left:612px;top:23px;width:1px;height:108px;background:#484848"></div><div class="cb" style="left:624px;top:29px"></div><div class="t" style="left:644px;top:29px">Only Current Layer</div><div class="cb" style="left:624px;top:67px"></div><div class="t" style="left:644px;top:67px">Show Retraction</div><div class="cb" style="left:624px;top:104px"><svg width="16" height="16" style="position:absolute;left:0;top:0"><path d="M2.5 8.5L6 12.5L14.5 1.5" stroke="#f0f0f0" stroke-width="2" fill="none"/></svg></div><div class="t" style="left:644px;top:104px">No Travel Move</div><div style="position:absolute;left:811px;top:23px;width:175px;height:30px;background:#3a3a3a;border:1px solid #161616;border-radius:2px"><div class="t" style="left:5px;top:5px">Structure</div><div style="position:absolute;left:147px;top:0;width:26px;height:28px;background:#686868;border-left:1px solid #2a2a2a"><svg width="26" height="28"><path d="M7 10L13 17L19 10Z" fill="#f0f0f0"/></svg></div></div></div><div style="position:absolute;left:0;top:0;width:2px;height:24px;background:#9aa6b4"></div><div style="position:absolute;left:0;top:101px;width:2px;height:227px;background:#36383b"></div><div style="position:absolute;left:0;top:328px;width:2px;height:69px;background:#1b57c9"></div><div style="position:absolute;left:0;top:397px;width:2px;height:900px;background:#c9c9cd"></div><div style="position:absolute;left:0;top:1316px;width:1800px;height:2px;background:#3d4043"></div></body></html>
